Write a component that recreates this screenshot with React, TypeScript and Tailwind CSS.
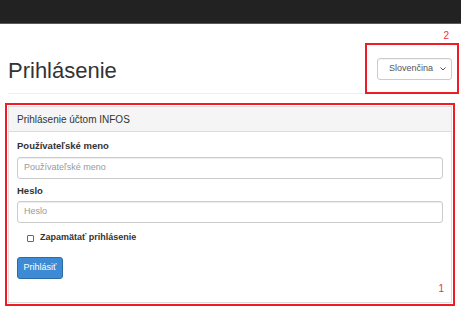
import React from "react";

export default function App() {
  return (
    <div className="relative w-[461px] h-[319px] overflow-hidden bg-white font-['Liberation_Sans',Arial,sans-serif] text-[#333]">
      {/* top navbar */}
      <div className="h-[24px] bg-[#222] border-b border-[#5a5a5a]" />

      {/* page header */}
      <div className="pl-2 pr-[9px]">
        <div className="relative flex h-[70px] items-center justify-between border-b border-[#eee] pt-[20px]">
          <h1 className="mt-[4px] text-[22px] leading-none font-normal text-[#333]">Prihlásenie</h1>
          <div className="flex h-[22px] w-[75px] items-center justify-between rounded-[3px] border border-[#ccc] pl-[11px] pr-[5px] text-[9px] text-[#555] shadow-[inset_0_1px_1px_rgba(0,0,0,0.05)]">
            <span>Slovenčina</span>
            <svg width="6" height="4" viewBox="0 0 6 4" fill="none">
              <path d="M0.5 0.5 L3 3 L5.5 0.5" stroke="#555" strokeWidth="1" />
            </svg>
          </div>
          {/* annotation 2 */}
          <div className="absolute right-[-7px] top-[19px] h-[51px] w-[94px] border-2 border-[#ee1c24]" />
          <span className="absolute right-[3px] top-[7px] text-[10px] leading-none text-[#e8333a]">2</span>
        </div>
      </div>

      {/* panel with annotation 1 */}
      <div className="relative ml-[5px] mt-[9px] w-[450px] border-2 border-[#ee1c24] p-px">
        <div className="border border-[#ddd] bg-white">
          <div className="flex h-[25px] items-center border-b border-[#ddd] bg-[#f5f5f5] px-2 text-[10px] text-[#333]">
            Prihlásenie účtom INFOS
          </div>
          <div className="px-2 pt-[7px] pb-[23px]">
            <div className="text-[9.5px] font-bold leading-[14px]">Používateľské meno</div>
            <div className="mt-[4px] flex h-[22px] items-center rounded-[3px] border border-[#ccc] px-[6px] text-[9px] text-[#999] shadow-[inset_0_1px_1px_rgba(0,0,0,0.075)]">
              Používateľské meno
            </div>
            <div className="mt-[5px] text-[9.5px] font-bold leading-[14px]">Heslo</div>
            <div className="mt-[3px] flex h-[22px] items-center rounded-[3px] border border-[#ccc] px-[6px] text-[9px] text-[#999] shadow-[inset_0_1px_1px_rgba(0,0,0,0.075)]">
              Heslo
            </div>
            <div className="mt-[8px] flex h-[14px] items-center pl-[10px]">
              <div className="h-[7px] w-[7px] rounded-[1px] border border-[#666] bg-white" />
              <span className="ml-[6px] text-[9px] font-bold">Zapamätať prihlásenie</span>
            </div>
            <div className="mt-[12px] flex h-[22px] w-[46px] items-center justify-center rounded-[3px] border border-[#2e6da4] bg-[#3d8bd4] text-[9px] text-white">
              Prihlásiť
            </div>
          </div>
        </div>
        <span className="absolute right-[9px] bottom-[10px] text-[10px] leading-none text-[#e8333a]">1</span>
      </div>
    </div>
  );
}
